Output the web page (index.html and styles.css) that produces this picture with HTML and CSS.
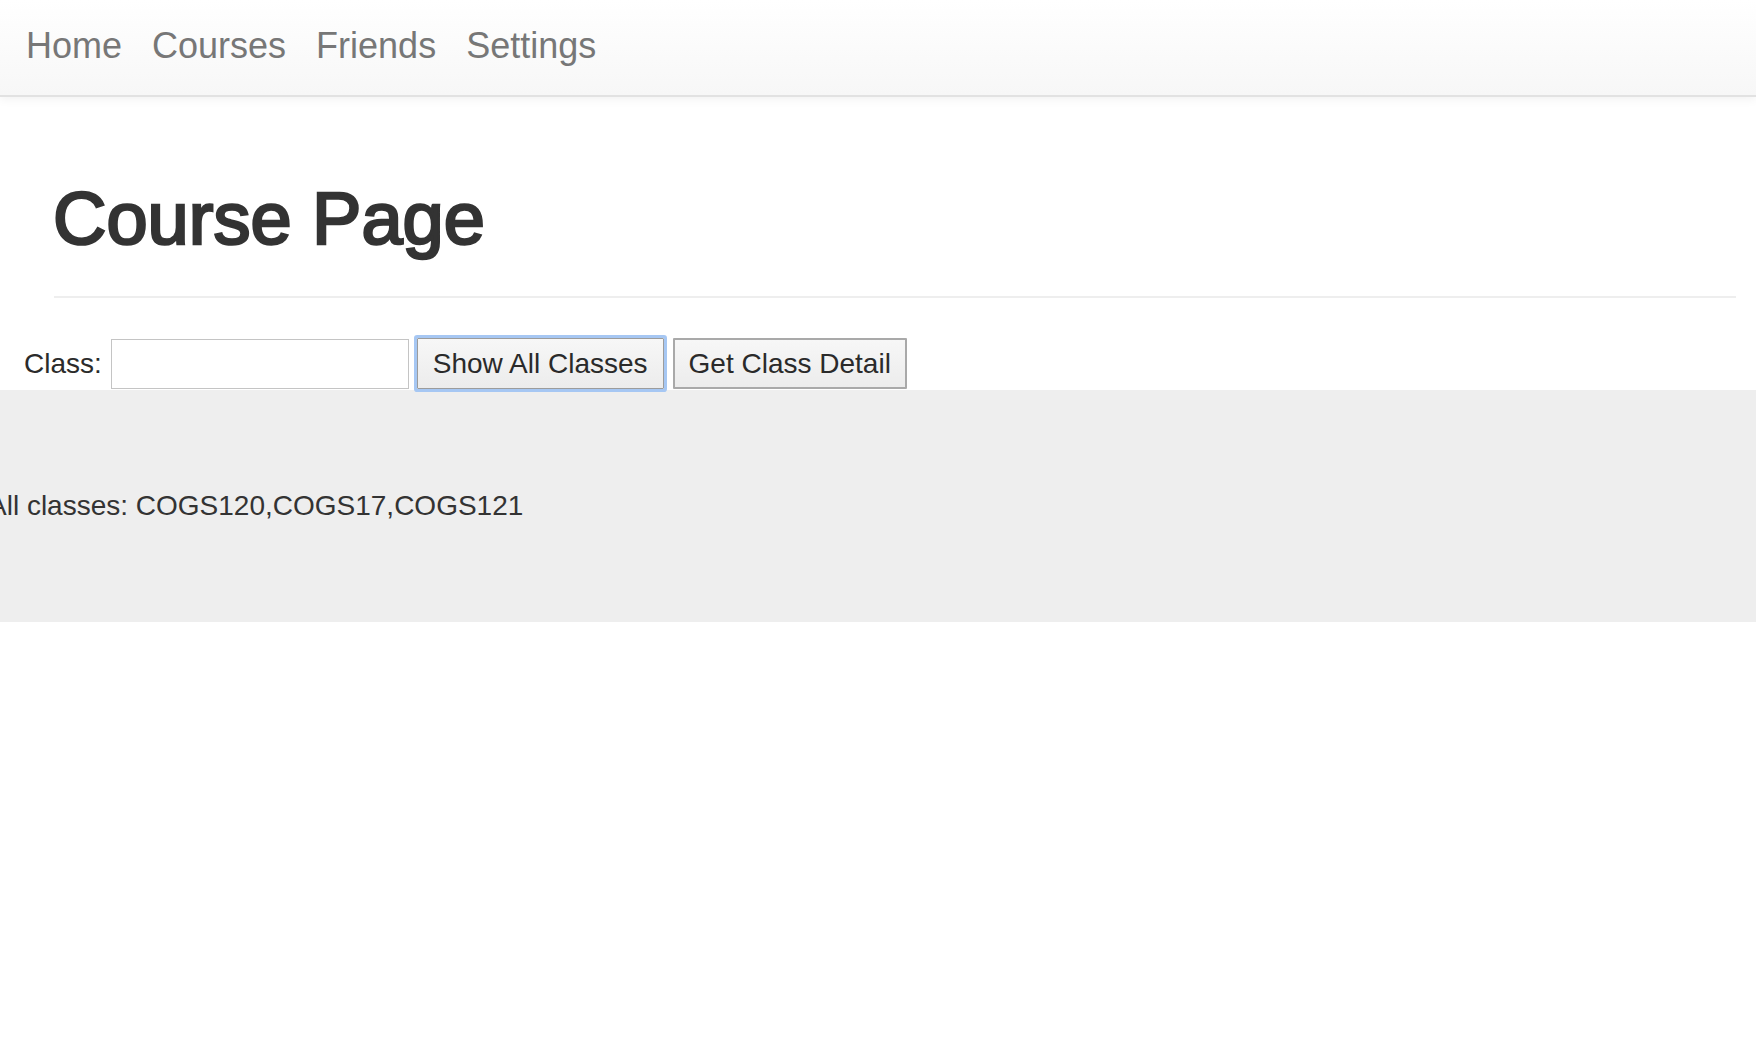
FILE: index.html
```html
<!DOCTYPE html>
<html lang="en">
<head>
<meta charset="utf-8">
<title>Course Page</title>
<link rel="stylesheet" href="styles.css">
</head>
<body>
  <nav class="navbar">
    <ul class="nav-links">
      <li><a href="#" class="nav-link">Home</a></li>
      <li><a href="#" class="nav-link">Courses</a></li>
      <li><a href="#" class="nav-link">Friends</a></li>
      <li><a href="#" class="nav-link">Settings</a></li>
    </ul>
  </nav>

  <div class="page-header">
    <h1 class="page-title">Course Page</h1>
  </div>

  <form class="class-form">
    <label class="class-label" for="classInput">Class:</label>
    <input class="class-input" id="classInput" type="text">
    <button type="button" class="btn btn-focused">Show All Classes</button>
    <button type="button" class="btn btn-plain">Get Class Detail</button>
  </form>

  <div class="results">
    <p class="results-text">All classes: COGS120,COGS17,COGS121</p>
  </div>
</body>
</html>
```

FILE: styles.css
```css
* {
  box-sizing: border-box;
}

html, body {
  margin: 0;
  padding: 0;
  background: #ffffff;
  font-family: "Liberation Sans", Arial, Helvetica, sans-serif;
  color: #333333;
}

.navbar {
  height: 97px;
  background: linear-gradient(to bottom, #ffffff 0%, #f7f7f7 100%);
  border-bottom: 2px solid #e2e2e2;
  box-shadow: 0 2px 10px rgba(0, 0, 0, 0.06);
  position: relative;
  z-index: 1;
}

.nav-links {
  list-style: none;
  margin: 0;
  padding: 26px 0 0 11px;
  display: flex;
}

.nav-link {
  display: block;
  padding: 0 15px;
  font-size: 36px;
  line-height: 40px;
  color: #777777;
  text-decoration: none;
}

.page-header {
  margin: 81px 20px 0 54px;
  padding-bottom: 36px;
  border-bottom: 2px solid #eeeeee;
}

.page-title {
  margin: 0 0 0 -1px;
  font-size: 74px;
  line-height: 82px;
  font-weight: normal;
  -webkit-text-stroke: 2.6px #333333;
  color: #333333;
}

.class-form {
  display: flex;
  align-items: center;
  margin: 40px 0 1px 24px;
  height: 51px;
}

.class-label {
  font-size: 28px;
  color: #2b2b2b;
  margin-right: 9px;
}

.class-input {
  width: 298px;
  height: 50px;
  margin: 1px 8px 0 0;
  border: 1px solid #c4c4c4;
  background: #ffffff;
  font-size: 28px;
  font-family: inherit;
}

.btn {
  height: 51px;
  font-family: inherit;
  font-size: 28px;
  color: #2a2a2a;
  background: linear-gradient(to bottom, #f7f7f7 0%, #ececec 100%);
  cursor: pointer;
  white-space: nowrap;
}

.btn-focused {
  padding: 0 15px;
  border: 1px solid #9c9c9c;
  border-radius: 1px;
  box-shadow: 0 0 0 3px #a6c7f3;
  margin-right: 9px;
}

.btn-plain {
  padding: 0 14px;
  border: 2px solid #a9a9a9;
  border-radius: 1px;
}

.results {
  background: #eeeeee;
  padding: 96px 0;
}

.results-text {
  margin: 0 0 0 -12px;
  font-size: 28px;
  line-height: 40px;
  color: #333333;
}
```
